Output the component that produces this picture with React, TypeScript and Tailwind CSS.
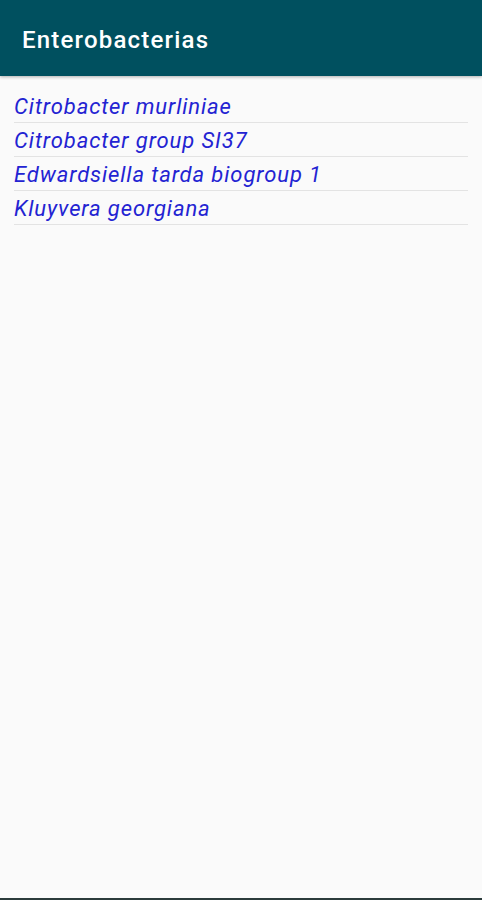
import React from 'react';

const items = [
    'Citrobacter murliniae',
    'Citrobacter group SI37',
    'Edwardsiella tarda biogroup 1',
    'Kluyvera georgiana',
];

const App = () => {
    return (
        <div className="flex flex-col w-[482px] h-[900px] bg-[#fafafa] font-['Roboto',sans-serif]">
            {/* toolbar */}
            <div className="flex items-center h-[76px] px-[22px] bg-[#00505f] shadow-[0_1px_3px_rgba(0,0,0,0.3)] z-10">
                <span className="text-[24px] font-medium tracking-[1.2px] text-white leading-none pt-[4px]">
                    Enterobacterias
                </span>
            </div>
            {/* list */}
            <div className="flex flex-col flex-1 px-[14px] pt-[13px]">
                {items.map((name) => (
                    <div
                        key={name}
                        className="h-[34px] flex items-end border-b-[1.5px] border-[#e3e3e3] w-[454px]"
                    >
                        <span className="text-[22px] italic tracking-[0.9px] text-[#2323d2] leading-[30px]">
                            {name}
                        </span>
                    </div>
                ))}
            </div>
            <div className="h-[2px] bg-[#2b3b3b]"></div>
        </div>
    );
};

export default App;
